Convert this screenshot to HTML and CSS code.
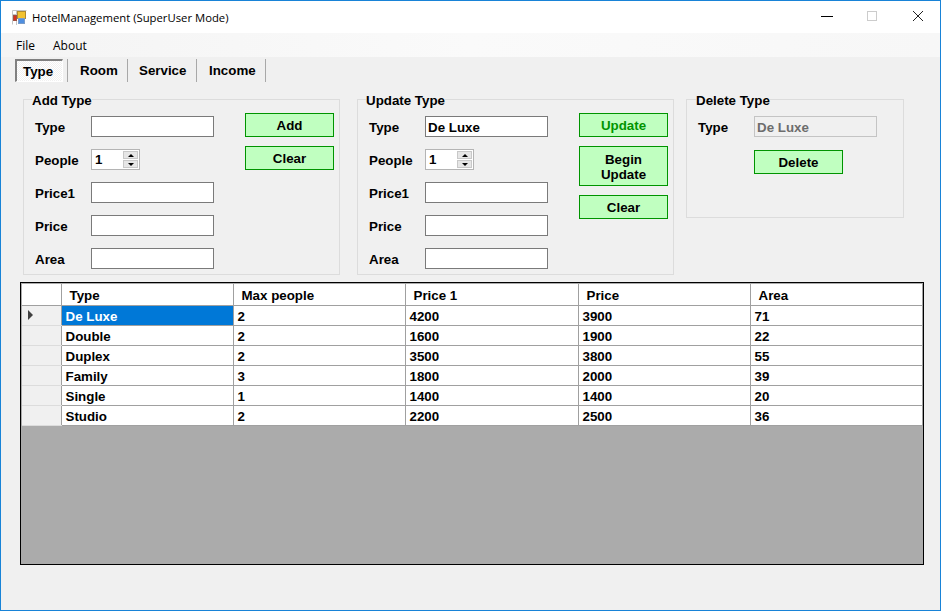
FILE: index.html
```html
<!DOCTYPE html>
<html>

<head>
    <meta charset="UTF-8" />
    <title>HotelManagement (SuperUser Mode)</title>
    <link rel="stylesheet" href="styles.css">
</head>

<body>
    <div class="window">
        <div class="titlebar">
            <svg class="app-icon" width="15" height="15" viewBox="0 0 15 15">
                <path d="M0.5 14.5v-14h14M0 4.5h5M4.5 0v15M0 10.5h5" stroke="#c4c4c4" fill="none" />
                <rect x="5.5" y="1.5" width="8" height="7" fill="#f2c230" stroke="#b08a30" />
                <rect x="1.5" y="5.5" width="3" height="5" fill="#d8301e" stroke="#a05040" />
                <rect x="6.5" y="8.5" width="6" height="5" fill="#4f8fe0" stroke="#7a9cc8" />
            </svg>
            <span class="title">HotelManagement (SuperUser Mode)</span>
            <div class="controls">
                <svg width="46" height="32" viewBox="0 0 46 32">
                    <path d="M19 15.5h12" stroke="#000" fill="none" />
                </svg>
                <svg width="46" height="32" viewBox="0 0 46 32">
                    <rect x="19.5" y="10.5" width="9" height="9" stroke="#ccc" fill="none" />
                </svg>
                <svg width="46" height="32" viewBox="0 0 46 32">
                    <path d="M19 10l10 10M29 10l-10 10" stroke="#222" fill="none" />
                </svg>
            </div>
        </div>

        <div class="menubar">
            <span class="menu-file">File</span>
            <span>About</span>
        </div>

        <div class="toolbar">
            <span class="tab tab-type"><span class="tab-active">Type</span></span>
            <span class="tab tab-room">Room</span>
            <span class="tab tab-service">Service</span>
            <span class="tab tab-income">Income</span>
        </div>

        <div class="groups">
            <fieldset class="group group-add">
                <legend>Add Type</legend>
                <div class="fields">
                    <div class="row"><label>Type</label><input type="text"></div>
                    <div class="row"><label>People</label>
                        <div class="spinner"><span>1</span><div class="spin-btns"><i class="up"></i><i class="down"></i></div></div>
                    </div>
                    <div class="row"><label>Price1</label><input type="text"></div>
                    <div class="row"><label>Price</label><input type="text"></div>
                    <div class="row"><label>Area</label><input type="text"></div>
                </div>
                <div class="actions">
                    <button>Add</button>
                    <button>Clear</button>
                </div>
            </fieldset>

            <fieldset class="group group-update">
                <legend>Update Type</legend>
                <div class="fields">
                    <div class="row"><label>Type</label><input type="text" value="De Luxe"></div>
                    <div class="row"><label>People</label>
                        <div class="spinner"><span>1</span><div class="spin-btns"><i class="up"></i><i class="down"></i></div></div>
                    </div>
                    <div class="row"><label>Price1</label><input type="text"></div>
                    <div class="row"><label>Price</label><input type="text"></div>
                    <div class="row"><label>Area</label><input type="text"></div>
                </div>
                <div class="actions">
                    <button class="btn-update">Update</button>
                    <button class="btn-tall">Begin<br>Update</button>
                    <button>Clear</button>
                </div>
            </fieldset>

            <fieldset class="group group-delete">
                <legend>Delete Type</legend>
                <div class="row"><label>Type</label><input class="input-off" type="text" value="De Luxe" readonly></div>
                <button class="btn-delete">Delete</button>
            </fieldset>
        </div>

        <div class="grid">
            <table>
                <thead>
                    <tr><th class="rowhead"></th><th>Type</th><th>Max people</th><th>Price 1</th><th>Price</th><th>Area</th></tr>
                </thead>
                <tbody>
                    <tr><td class="rowhead"><span class="arrow"></span></td><td class="selected">De Luxe</td><td>2</td><td>4200</td><td>3900</td><td>71</td></tr>
                    <tr><td class="rowhead"></td><td>Double</td><td>2</td><td>1600</td><td>1900</td><td>22</td></tr>
                    <tr><td class="rowhead"></td><td>Duplex</td><td>2</td><td>3500</td><td>3800</td><td>55</td></tr>
                    <tr><td class="rowhead"></td><td>Family</td><td>3</td><td>1800</td><td>2000</td><td>39</td></tr>
                    <tr><td class="rowhead"></td><td>Single</td><td>1</td><td>1400</td><td>1400</td><td>20</td></tr>
                    <tr><td class="rowhead"></td><td>Studio</td><td>2</td><td>2200</td><td>2500</td><td>36</td></tr>
                </tbody>
            </table>
        </div>
    </div>
</body>

</html>
```

FILE: styles.css
```css
* {
    box-sizing: border-box;
}

html,
body {
    margin: 0;
    height: 611px;
    overflow: hidden;
    background: #ffffff;
}

body {
    font-family: "Liberation Sans", Arial, sans-serif;
    font-size: 13.33px;
    font-weight: bold;
    color: #000000;
}

.window {
    width: 941px;
    height: 611px;
    border: 1px solid #1883d7;
    background: #f0f0f0;
}

.titlebar {
    display: flex;
    align-items: center;
    height: 32px;
    background: #ffffff;
    padding-left: 11px;
    font-family: "Open Sans", "Noto Sans", sans-serif;
    font-size: 11.3px;
    font-weight: normal;
}

.app-icon {
    margin-right: 5px;
}

.controls {
    display: flex;
    margin-left: auto;
}

.menubar {
    display: flex;
    align-items: center;
    height: 24px;
    padding-left: 15px;
    background: linear-gradient(to right, #f4f4f4, #fafafa 50%, #f7f7f7);
    font-family: "Open Sans", "Noto Sans", sans-serif;
    font-size: 12px;
    font-weight: normal;
}

.menu-file {
    margin-right: 18px;
}

.toolbar {
    display: flex;
    height: 26px;
    padding: 2px 0 0 14px;
}

.tab {
    display: flex;
    align-items: center;
    height: 23px;
    border-right: 1px solid #a8a8a8;
}

.tab-type {
    width: 53px;
}

.tab-active {
    display: block;
    width: 48px;
    height: 23px;
    line-height: 22px;
    padding-left: 6px;
    border-style: solid;
    border-width: 2px 1px 1px 2px;
    border-color: #808080 #ffffff #ffffff #808080;
    background: repeating-conic-gradient(#ffffff 0 25%, #f0f0f0 0 50%) 0 0 / 2px 2px;
}

.tab-room {
    width: 60px;
    padding-left: 12px;
}

.tab-service {
    width: 69px;
    padding-left: 11px;
}

.tab-income {
    width: 69px;
    padding-left: 12px;
}

.groups {
    display: flex;
    align-items: flex-start;
    padding: 8px 0 0 22px;
}

.group {
    display: flex;
    margin: 0;
    padding: 0;
    border: 1px solid #dcdcdc;
    width: 317px;
    height: 184px;
}

.group legend {
    margin-left: 8px;
    padding: 2px 0 0;
    line-height: 15px;
}

.group-update {
    margin-left: 17px;
}

.group-delete {
    display: block;
    margin-left: 12px;
    width: 218px;
    height: 127px;
    padding: 8px 0 0 11px;
}

.group-delete legend {
    margin-left: -2px;
}

.fields {
    display: flex;
    flex-direction: column;
    gap: 12px;
    width: 221px;
    padding: 8px 0 0 11px;
}

.row {
    display: flex;
    align-items: center;
    height: 21px;
}

.row label {
    width: 56px;
    padding-top: 1px;
}

.row input {
    width: 123px;
    height: 21px;
    margin: 0;
    padding: 1px 2px 0;
    border: 1px solid #7a7a7a;
    background: #ffffff;
    font: inherit;
    color: #000000;
    outline: none;
}

.row .input-off {
    border-color: #c4c4c4;
    background: #f0f0f0;
    color: #6d6d6d;
}

.spinner {
    display: flex;
    align-items: center;
    justify-content: space-between;
    width: 49px;
    height: 21px;
    padding: 0 1px 0 3px;
    border: 1px solid #b4b4b4;
    background: #ffffff;
}

.spin-btns {
    display: flex;
    flex-direction: column;
    gap: 1px;
    width: 15px;
    height: 17px;
}

.spin-btns i {
    display: flex;
    align-items: center;
    justify-content: center;
    flex: 1;
    background: #e6e6e6;
    border: 1px solid #c8c8c8;
}

.spin-btns .up::after,
.spin-btns .down::after {
    content: "";
    border-left: 3px solid transparent;
    border-right: 3px solid transparent;
}

.spin-btns .up::after {
    border-bottom: 3px solid #000000;
}

.spin-btns .down::after {
    border-top: 3px solid #000000;
}

.actions {
    display: flex;
    flex-direction: column;
    gap: 9px;
    padding-top: 5px;
}

button {
    display: block;
    width: 89px;
    height: 24px;
    margin: 0;
    padding: 0;
    border: 1px solid #009400;
    background: #c0ffc0;
    font: inherit;
    color: #000000;
}

.btn-update {
    color: #009400;
}

.btn-tall {
    height: 40px;
    padding-top: 2px;
    line-height: 15px;
}

.btn-delete {
    margin: 13px 0 0 56px;
}

.grid {
    width: 904px;
    height: 283px;
    margin: 7px 0 0 19px;
    padding: 1px;
    border: 1px solid #000000;
    background: #ababab;
}

table {
    width: 901px;
    table-layout: fixed;
    border-collapse: collapse;
    background: #ffffff;
}

th,
td {
    height: 20px;
    padding: 2px 0 0 4px;
    border-right: 1px solid #a0a0a0;
    border-bottom: 1px solid #a0a0a0;
    text-align: left;
    font-weight: bold;
}

thead th {
    width: 172px;
    height: 21px;
    padding: 2px 0 0 8px;
    background: #ffffff;
}

thead th:nth-child(4) {
    width: 173px;
}

thead th:last-child {
    width: auto;
}

thead th.rowhead {
    width: 39px;
    padding: 0;
}

td.rowhead {
    padding: 0 0 0 6px;
    background: #f0f0f0;
    border-bottom-color: #dcdcdc;
}

td.selected {
    background: #0078d7;
    color: #ffffff;
}

.arrow {
    display: block;
    width: 0;
    height: 0;
    border-top: 5px solid transparent;
    border-bottom: 5px solid transparent;
    border-left: 5px solid #404040;
}
```
